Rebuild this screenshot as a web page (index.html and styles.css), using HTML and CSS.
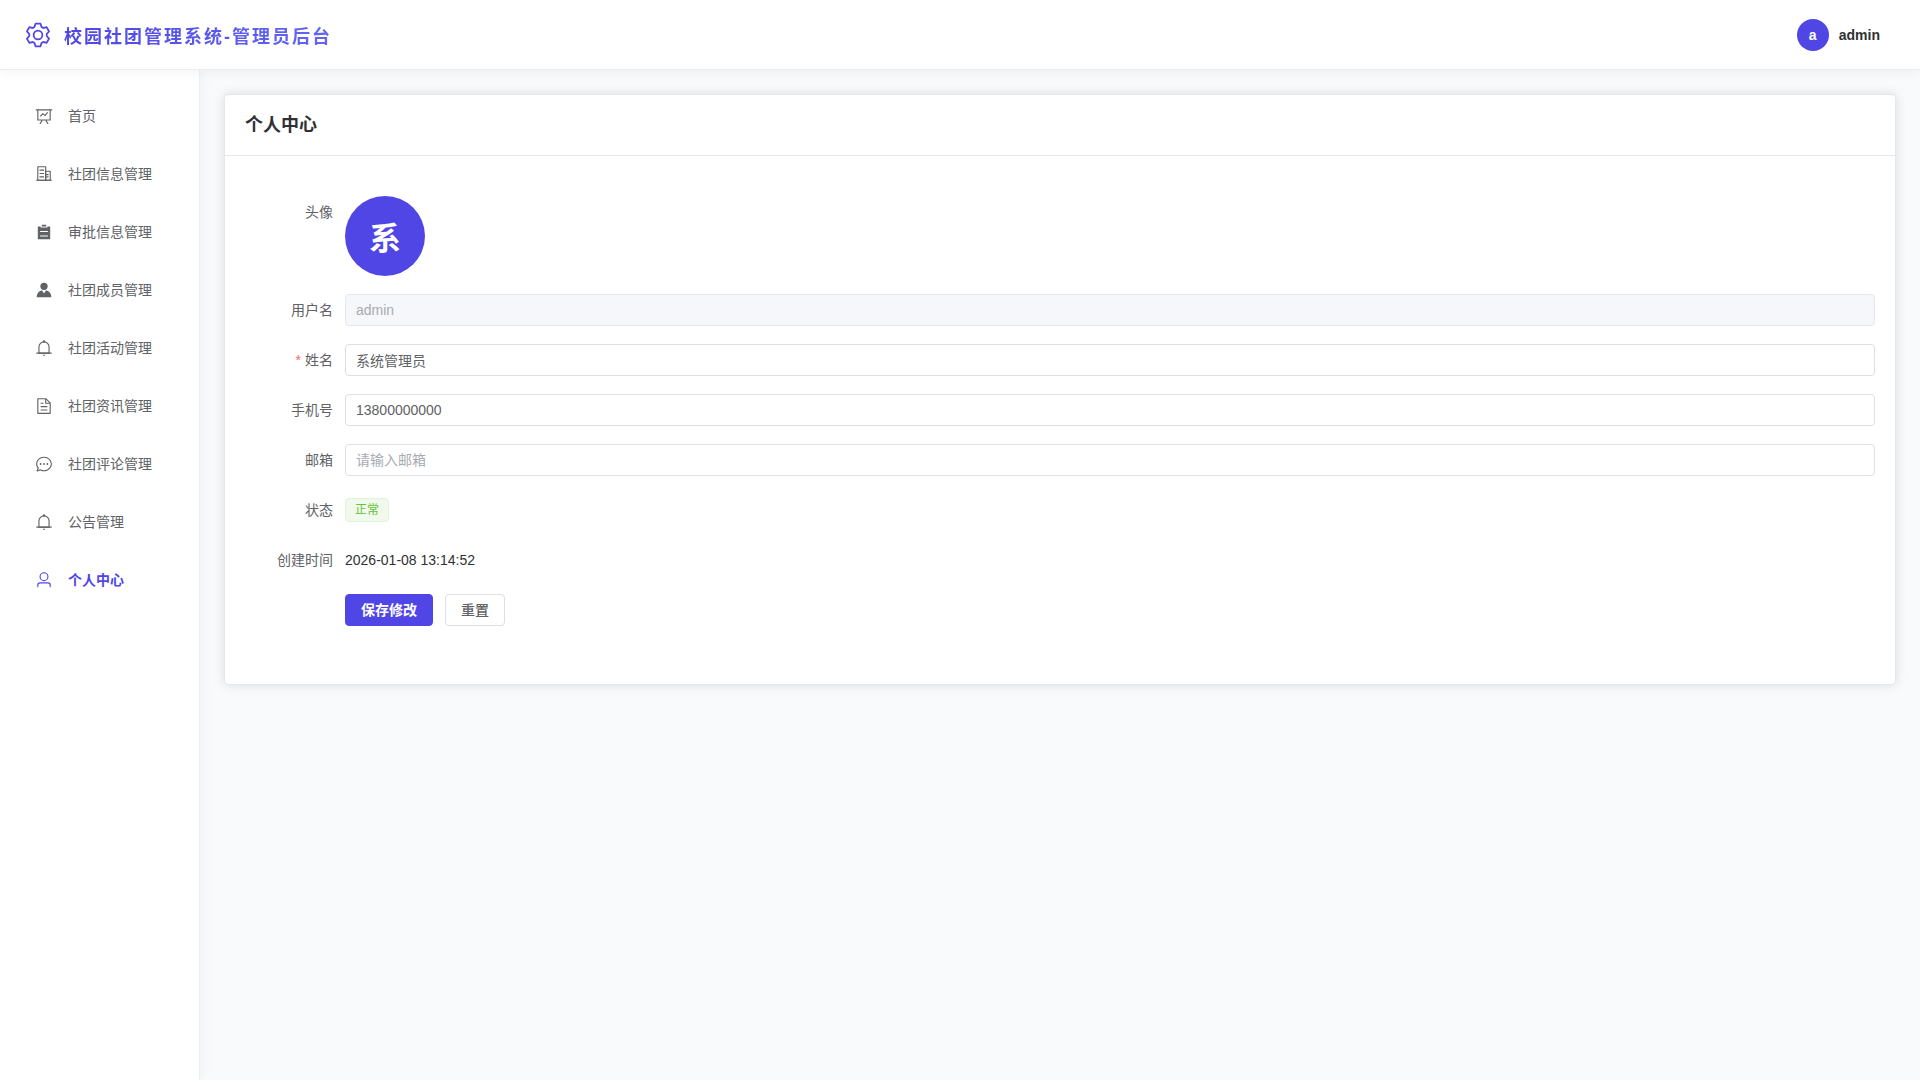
FILE: index.html
```html
<!DOCTYPE html>
<html lang="zh-CN">
<head>
    <meta charset="UTF-8">
    <meta name="viewport" content="width=device-width, initial-scale=1.0">
    <title>校园社团管理系统-管理员后台</title>
    <link rel="stylesheet" href="styles.css">
</head>
<body>
    <header class="header">
        <div class="logo">
            <svg class="logo-icon" viewBox="0 0 1024 1024" aria-hidden="true"><path d="M600.704 64a32 32 0 0 1 30.464 22.208l35.2 109.376c14.784 7.232 28.928 15.36 42.432 24.512l112.384-24.192a32 32 0 0 1 34.432 15.36L944.32 364.8a32 32 0 0 1-4.032 37.504l-77.12 85.12a357.12 357.12 0 0 1 0 49.024l77.12 85.248a32 32 0 0 1 4.032 37.504l-88.704 153.6a32 32 0 0 1-34.432 15.296L708.8 803.904c-13.44 9.088-27.648 17.28-42.368 24.512l-35.264 109.376A32 32 0 0 1 600.704 960H423.296a32 32 0 0 1-30.464-22.208L357.696 828.48a351.616 351.616 0 0 1-42.56-24.64l-112.32 24.256a32 32 0 0 1-34.432-15.36L79.68 659.2a32 32 0 0 1 4.032-37.504l77.12-85.248a357.12 357.12 0 0 1 0-48.896l-77.12-85.248A32 32 0 0 1 79.68 364.8l88.704-153.6a32 32 0 0 1 34.432-15.296l112.32 24.256c13.568-9.152 27.776-17.408 42.56-24.64l35.2-109.312A32 32 0 0 1 423.232 64H600.64zm-23.424 64H446.72l-36.352 113.088-24.512 11.968a294.113 294.113 0 0 0-34.816 20.096l-22.656 15.36-116.224-25.088-65.28 113.152 79.68 88.192-1.92 27.136a293.12 293.12 0 0 0 0 40.192l1.92 27.136-79.808 88.192 65.344 113.152 116.224-25.024 22.656 15.296a294.113 294.113 0 0 0 34.816 20.096l24.512 11.968L446.72 896h130.688l36.48-113.152 24.448-11.904a288.282 288.282 0 0 0 34.752-20.096l22.592-15.296 116.288 25.024 65.28-113.152-79.744-88.192 1.92-27.136a293.12 293.12 0 0 0 0-40.256l-1.92-27.136 79.808-88.128-65.344-113.152-116.288 24.96-22.592-15.232a287.616 287.616 0 0 0-34.752-20.096l-24.448-11.904L577.344 128zM512 320a192 192 0 1 1 0 384 192 192 0 0 1 0-384m0 64a128 128 0 1 0 0 256 128 128 0 0 0 0-256"/></svg>
            <h1 class="logo-text">校园社团管理系统-管理员后台</h1>
        </div>
        <button type="button" class="user">
            <span class="avatar">a</span>
            <span>admin</span>
        </button>
    </header>
    <div class="container">
        <nav class="sidebar">
            <a class="menu-item" href="#home">
                <svg class="menu-icon" viewBox="0 0 1024 1024" aria-hidden="true"><path d="M359.168 768H160a32 32 0 0 1-32-32V192H64a32 32 0 0 1 0-64h896a32 32 0 1 1 0 64h-64v544a32 32 0 0 1-32 32H665.216l110.848 192h-73.856L591.36 768H433.024L322.176 960H248.32zM832 192H192v512h640zM342.656 534.656a32 32 0 1 1-45.312-45.312L444.992 341.76l125.44 94.08L679.04 300.032a32 32 0 1 1 49.92 39.936L581.632 524.224 451.008 426.24z"/></svg>
                <span>首页</span>
            </a>
            <a class="menu-item" href="#club">
                <svg class="menu-icon" viewBox="0 0 1024 1024" aria-hidden="true"><path d="M192 128v704h384V128zm-32-64h448a32 32 0 0 1 32 32v768a32 32 0 0 1-32 32H160a32 32 0 0 1-32-32V96a32 32 0 0 1 32-32"/><path d="M256 256h256v64H256zm0 192h256v64H256zm0 192h256v64H256zm384-128h128v64H640zm0 128h128v64H640zM64 832h896v64H64z"/><path d="M640 384v448h192V384zm-32-64h256a32 32 0 0 1 32 32v512a32 32 0 0 1-32 32H608a32 32 0 0 1-32-32V352a32 32 0 0 1 32-32"/></svg>
                <span>社团信息管理</span>
            </a>
            <a class="menu-item" href="#approval">
                <svg class="menu-icon" viewBox="0 0 1024 1024" aria-hidden="true"><path d="M704 192h160v736H160V192h160v64h384zM288 512h448v-64H288zm0 256h448v-64H288zm96-576V96h256v96z"/></svg>
                <span>审批信息管理</span>
            </a>
            <a class="menu-item" href="#member">
                <svg class="menu-icon" viewBox="0 0 1024 1024" aria-hidden="true"><path d="M628.736 528.896A416 416 0 0 1 928 928H96a415.872 415.872 0 0 1 299.264-399.104L512 704zM720 304a208 208 0 1 1-416 0 208 208 0 0 1 416 0"/></svg>
                <span>社团成员管理</span>
            </a>
            <a class="menu-item" href="#activity">
                <svg class="menu-icon" viewBox="0 0 1024 1024" aria-hidden="true"><path d="M512 64a64 64 0 0 1 64 64v64H448v-64a64 64 0 0 1 64-64"/><path d="M256 768h512V448a256 256 0 1 0-512 0zm256-640a320 320 0 0 1 320 320v384H192V448a320 320 0 0 1 320-320"/><path d="M96 768h832q32 0 32 32t-32 32H96q-32 0-32-32t32-32m352 128h128a64 64 0 0 1-128 0"/></svg>
                <span>社团活动管理</span>
            </a>
            <a class="menu-item" href="#news">
                <svg class="menu-icon" viewBox="0 0 1024 1024" aria-hidden="true"><path d="M832 384H576V128H192v768h640zm-26.496-64L640 154.496V320zM160 64h480l256 256v608a32 32 0 0 1-32 32H160a32 32 0 0 1-32-32V96a32 32 0 0 1 32-32m160 448h384v64H320zm0-192h160v64H320zm0 384h384v64H320z"/></svg>
                <span>社团资讯管理</span>
            </a>
            <a class="menu-item" href="#comment">
                <svg class="menu-icon" viewBox="0 0 1024 1024" aria-hidden="true"><path d="m174.72 855.68 135.296-45.12 23.68 11.84C388.096 849.536 448.576 864 512 864c211.84 0 384-166.784 384-352S723.84 160 512 160 128 326.784 128 512c0 69.12 24.96 139.264 70.848 199.232l22.08 28.8-46.272 115.584zm-45.248 82.56A32 32 0 0 1 89.6 896l58.368-145.92C94.72 680.32 64 596.864 64 512 64 299.904 256 96 512 96s448 203.904 448 416-192 416-448 416a461.06 461.06 0 0 1-206.912-48.384l-175.616 58.56z"/><path d="M512 563.2a51.2 51.2 0 1 1 0-102.4 51.2 51.2 0 0 1 0 102.4m192 0a51.2 51.2 0 1 1 0-102.4 51.2 51.2 0 0 1 0 102.4m-384 0a51.2 51.2 0 1 1 0-102.4 51.2 51.2 0 0 1 0 102.4"/></svg>
                <span>社团评论管理</span>
            </a>
            <a class="menu-item" href="#notice">
                <svg class="menu-icon" viewBox="0 0 1024 1024" aria-hidden="true"><path d="M512 64a64 64 0 0 1 64 64v64H448v-64a64 64 0 0 1 64-64"/><path d="M256 768h512V448a256 256 0 1 0-512 0zm256-640a320 320 0 0 1 320 320v384H192V448a320 320 0 0 1 320-320"/><path d="M96 768h832q32 0 32 32t-32 32H96q-32 0-32-32t32-32m352 128h128a64 64 0 0 1-128 0"/></svg>
                <span>公告管理</span>
            </a>
            <a class="menu-item active" href="#profile">
                <svg class="menu-icon" viewBox="0 0 1024 1024" aria-hidden="true"><path d="M512 512a192 192 0 1 0 0-384 192 192 0 0 0 0 384m0 64a256 256 0 1 1 0-512 256 256 0 0 1 0 512m320 320v-96a96 96 0 0 0-96-96H288a96 96 0 0 0-96 96v96a32 32 0 1 1-64 0v-96a160 160 0 0 1 160-160h448a160 160 0 0 1 160 160v96a32 32 0 1 1-64 0"/></svg>
                <span>个人中心</span>
            </a>
        </nav>
        <main class="main">
            <section class="card">
                <h2 class="card-header">个人中心</h2>
                <form class="form">
                    <div class="form-item">
                        <span class="label">头像</span>
                        <div class="avatar avatar-large">系</div>
                    </div>
                    <div class="form-item">
                        <label class="label" for="username">用户名</label>
                        <input class="input" id="username" type="text" value="admin" disabled>
                    </div>
                    <div class="form-item">
                        <label class="label required" for="name">姓名</label>
                        <input class="input" id="name" type="text" value="系统管理员" required>
                    </div>
                    <div class="form-item">
                        <label class="label" for="phone">手机号</label>
                        <input class="input" id="phone" type="tel" value="13800000000">
                    </div>
                    <div class="form-item">
                        <label class="label" for="email">邮箱</label>
                        <input class="input" id="email" type="email" placeholder="请输入邮箱">
                    </div>
                    <div class="form-item">
                        <span class="label">状态</span>
                        <div class="content"><span class="tag">正常</span></div>
                    </div>
                    <div class="form-item">
                        <span class="label">创建时间</span>
                        <div class="content">2026-01-08 13:14:52</div>
                    </div>
                    <div class="form-item form-buttons">
                        <button type="submit" class="btn btn-primary">保存修改</button>
                        <button type="reset" class="btn">重置</button>
                    </div>
                </form>
            </section>
        </main>
    </div>
</body>
</html>
```
FILE: styles.css
```css
* {
    box-sizing: border-box;
    margin: 0;
    padding: 0;
}
body {
    display: flex;
    flex-direction: column;
    min-height: 100vh;
    font-family: "Liberation Sans", "Noto Sans CJK SC", sans-serif;
    font-size: 14px;
    color: #303133;
    background: #f9fafc;
}
button,
input {
    font: inherit;
}

/* 顶部栏 */
.header {
    position: relative;
    z-index: 2;
    display: flex;
    align-items: center;
    justify-content: space-between;
    height: 70px;
    padding: 0 24px;
    background: #fff;
    border-bottom: 1px solid #ebeef0;
    box-shadow: 0 2px 12px rgba(0, 0, 0, 0.05);
}
.logo {
    display: flex;
    align-items: center;
    gap: 12px;
}
.logo-icon {
    width: 28px;
    height: 28px;
    fill: #4f46e5;
}
.logo-text {
    font-size: 18px;
    font-weight: 700;
    letter-spacing: 2px;
    color: transparent;
    background: linear-gradient(90deg, #4f46e5, #6366f1);
    background-clip: text;
}
.user {
    display: flex;
    align-items: center;
    gap: 10px;
    padding: 8px 16px;
    border: none;
    background: none;
    color: #303133;
    font-weight: 700;
    cursor: pointer;
}
.avatar {
    display: flex;
    align-items: center;
    justify-content: center;
    width: 32px;
    height: 32px;
    border-radius: 50%;
    background: #4f46e5;
    color: #fff;
    font-weight: 700;
}
.avatar-large {
    width: 80px;
    height: 80px;
    font-size: 32px;
}

.container {
    display: flex;
    flex: 1;
}

/* 侧边菜单 */
.sidebar {
    position: relative;
    z-index: 1;
    display: flex;
    flex-direction: column;
    gap: 6px;
    flex: 0 0 200px;
    padding: 20px 8px;
    background: #fff;
    border-right: 1px solid #eef1f1;
    box-shadow: 2px 0 12px rgba(0, 0, 0, 0.04);
}
.menu-item {
    display: flex;
    align-items: center;
    gap: 12px;
    height: 52px;
    padding: 0 24px;
    line-height: 18px;
    color: #606266;
    text-decoration: none;
}
.menu-item.active {
    color: #4f46e5;
    font-weight: 700;
}
.menu-icon {
    width: 24px;
    height: 18px;
    fill: currentColor;
}

/* 内容区 */
.main {
    flex: 1;
    padding: 24px;
}
.card {
    background: #fff;
    border: 1px solid #e4e7ed;
    border-radius: 4px;
    box-shadow: 0 0 12px rgba(0, 0, 0, 0.12);
}
.card-header {
    padding: 18px 20px;
    font-size: 18px;
    line-height: 24px;
    border-bottom: 1px solid #e4e7ed;
}
.form {
    padding: 40px 20px;
}
.form-item {
    display: flex;
    margin-bottom: 18px;
}
.label {
    flex: 0 0 100px;
    padding-right: 12px;
    text-align: right;
    line-height: 32px;
    color: #606266;
}
.required::before {
    content: "*";
    margin-right: 4px;
    color: #f56c6c;
}
.input {
    flex: 1;
    height: 32px;
    padding: 0 10px;
    border: 1px solid #dcdfe6;
    border-radius: 4px;
    outline: none;
    background: #fff;
    color: #606266;
}
.input:focus {
    border-color: #4f46e5;
}
.input::placeholder {
    color: #a8abb2;
}
.input:disabled {
    background: #f5f7fa;
    border-color: #e4e7ed;
    color: #a8abb2;
}
.content {
    display: flex;
    align-items: center;
    height: 32px;
}
.tag {
    height: 24px;
    padding: 0 9px;
    border: 1px solid #e1f3d8;
    border-radius: 4px;
    background: #f0f9eb;
    color: #67c23a;
    font-size: 12px;
    line-height: 22px;
}
.form-buttons {
    gap: 12px;
    padding-left: 100px;
}
.btn {
    height: 32px;
    padding: 0 15px;
    border: 1px solid #dcdfe6;
    border-radius: 4px;
    background: #fff;
    color: #606266;
    font-weight: 500;
    line-height: 18px;
    cursor: pointer;
}
.btn-primary {
    border-color: #4f46e5;
    background: #4f46e5;
    color: #fff;
    font-weight: 700;
}
```
